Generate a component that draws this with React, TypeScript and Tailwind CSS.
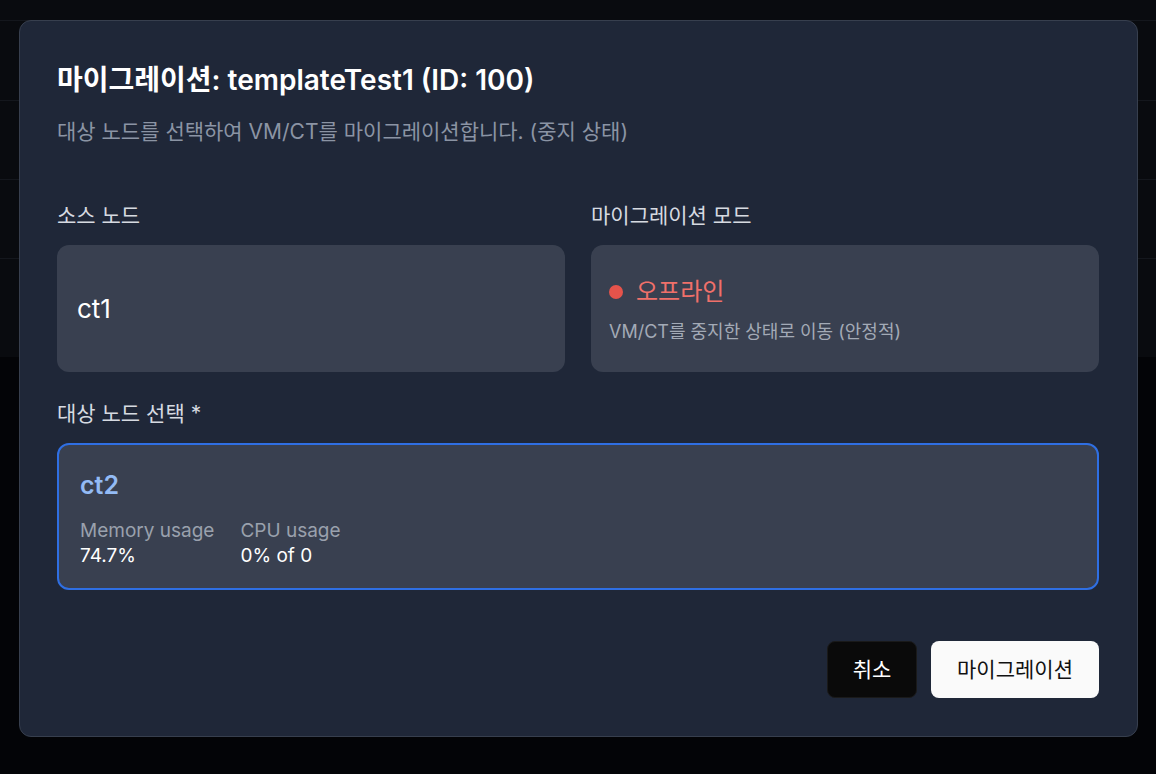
export default function App() {
  const font = { fontFamily: 'Inter, "Noto Sans CJK KR", sans-serif' }
  return (
    <div className="relative h-[774px] w-[1156px] overflow-hidden bg-[#030407]" style={font}>
      {/* Background table behind overlay */}
      <div className="flex flex-col bg-[#090b0f]">
        <div className="h-[20px]" />
        <div className="h-[80px] border-t border-[#14171d]" />
        <div className="h-[79px] border-t border-[#14171d]" />
        <div className="h-[79px] border-t border-[#14171d]" />
        <div className="h-[99px] border-t border-[#14171d]" />
      </div>

      {/* Dialog */}
      <div className="absolute left-[19px] top-[20px] flex h-[717px] w-[1119px] flex-col rounded-[12px] border border-[#373f4e] bg-[#1f2738] pl-[37px] pr-[38px] pt-[41px]">
        <h2 className="text-[28px] font-semibold leading-[36px] text-white">
          마이그레이션: templateTest1 (ID: 100)
        </h2>
        <p className="mt-[20px] text-[21px] leading-[28px] text-[#8b94a4]">
          대상 노드를 선택하여 VM/CT를 마이그레이션합니다. (중지 상태)
        </p>

        <div className="mt-[56px] grid grid-cols-2 gap-[26px]">
          <div className="flex flex-col">
            <label className="text-[21px] leading-[28px] text-[#d6dae1]">소스 노드</label>
            <div className="mt-[15px] flex h-[127px] items-center rounded-[12px] bg-[#394050] px-[20px]">
              <span className="text-[26px] leading-[34px] text-white">ct1</span>
            </div>
          </div>
          <div className="flex flex-col">
            <label className="text-[21px] leading-[28px] text-[#d6dae1]">마이그레이션 모드</label>
            <div className="mt-[15px] flex h-[127px] flex-col justify-center gap-[11px] rounded-[12px] bg-[#394050] px-[18px] pt-[4px]">
              <div className="flex items-center gap-[13px]">
                <span className="h-[14px] w-[14px] rounded-full bg-[#e5534b]" />
                <span className="text-[24px] leading-[32px] text-[#f0706a]">오프라인</span>
              </div>
              <span className="text-[18px] leading-[26px] text-[#a3aab6]">
                VM/CT를 중지한 상태로 이동 (안정적)
              </span>
            </div>
          </div>
        </div>

        <label className="mt-[28px] text-[21px] leading-[28px] text-[#d6dae1]">대상 노드 선택 *</label>
        <div className="mt-[15px] flex h-[147px] flex-col rounded-[12px] border-2 border-[#2f6fe3] bg-[#394050] px-[21px] pt-[24px]">
          <span className="text-[25px] font-semibold leading-[32px] text-[#93bbf5]">ct2</span>
          <div className="mt-[17px] flex gap-[26px]">
            <div className="flex flex-col">
              <span className="text-[19px] leading-[25px] text-[#9aa1ad]">Memory usage</span>
              <span className="text-[19px] leading-[25px] text-white">74.7%</span>
            </div>
            <div className="flex flex-col">
              <span className="text-[19px] leading-[25px] text-[#9aa1ad]">CPU usage</span>
              <span className="text-[19px] leading-[25px] text-white">0% of 0</span>
            </div>
          </div>
        </div>

        <div className="mt-[51px] flex justify-end gap-[14px]">
          <button className="h-[57px] w-[90px] rounded-[8px] border border-[#1a1a1a] bg-[#0a0a0a] text-[21px] text-white">
            취소
          </button>
          <button className="h-[57px] w-[168px] rounded-[8px] bg-[#fafafa] text-[21px] text-[#111]">
            마이그레이션
          </button>
        </div>
      </div>
    </div>
  )
}
